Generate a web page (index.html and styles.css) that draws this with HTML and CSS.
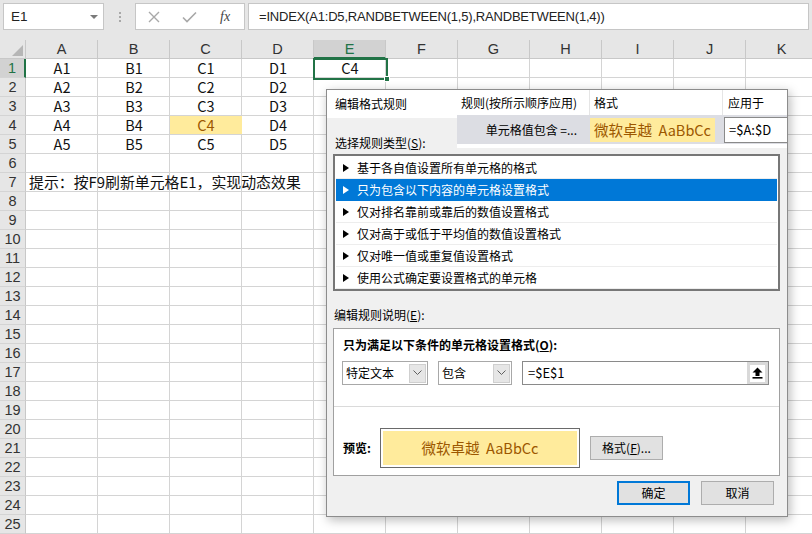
FILE: index.html
```html
<!DOCTYPE html>
<html lang="zh-CN">
<head>
<meta charset="utf-8">
<title>编辑格式规则</title>
<link rel="stylesheet" href="styles.css">
</head>
<body>
<div class="topbar">
  <div class="namebox"><span>E1</span><span class="tri"></span></div>
  <div class="grip"><i></i><i></i><i></i></div>
  <div class="fxbox">
    <svg class="ic-x" width="12" height="12" viewBox="0 0 12 12"><path d="M1 1L11 11M11 1L1 11" stroke="#a8a8a8" stroke-width="1.4" fill="none"/></svg>
    <svg class="ic-ok" width="15" height="12" viewBox="0 0 15 12"><path d="M1 6.5L5 10.5L14 1.5" stroke="#a8a8a8" stroke-width="1.6" fill="none"/></svg>
    <span class="fx">fx</span>
  </div>
  <div class="formula">=INDEX(A1:D5,RANDBETWEEN(1,5),RANDBETWEEN(1,4))</div>
</div>

<div class="sheet">
  <div class="hrow">
    <div class="corner"><span class="ctri"></span></div>
    <div class="ch">A</div><div class="ch">B</div><div class="ch">C</div><div class="ch">D</div>
    <div class="ch sel">E</div><div class="ch">F</div><div class="ch">G</div><div class="ch">H</div>
    <div class="ch">I</div><div class="ch">J</div><div class="ch">K</div>
  </div>
  <div class="row"><div class="rh sel">1</div><div class="cells"><div class="c">A1</div><div class="c">B1</div><div class="c">C1</div><div class="c">D1</div><div class="c active">C4<span class="selbox"><span class="handle"></span></span></div></div></div>
  <div class="row"><div class="rh">2</div><div class="cells"><div class="c">A2</div><div class="c">B2</div><div class="c">C2</div><div class="c">D2</div></div></div>
  <div class="row"><div class="rh">3</div><div class="cells"><div class="c">A3</div><div class="c">B3</div><div class="c">C3</div><div class="c">D3</div></div></div>
  <div class="row"><div class="rh">4</div><div class="cells"><div class="c">A4</div><div class="c">B4</div><div class="c neutral">C4</div><div class="c">D4</div></div></div>
  <div class="row"><div class="rh">5</div><div class="cells"><div class="c">A5</div><div class="c">B5</div><div class="c">C5</div><div class="c">D5</div></div></div>
  <div class="row"><div class="rh">6</div><div class="cells"></div></div>
  <div class="row"><div class="rh">7</div><div class="cells"><div class="hint">提示：按F9刷新单元格E1，实现动态效果</div></div></div>
  <div class="row"><div class="rh">8</div><div class="cells"></div></div>
  <div class="row"><div class="rh">9</div><div class="cells"></div></div>
  <div class="row"><div class="rh">10</div><div class="cells"></div></div>
  <div class="row"><div class="rh">11</div><div class="cells"></div></div>
  <div class="row"><div class="rh">12</div><div class="cells"></div></div>
  <div class="row"><div class="rh">13</div><div class="cells"></div></div>
  <div class="row"><div class="rh">14</div><div class="cells"></div></div>
  <div class="row"><div class="rh">15</div><div class="cells"></div></div>
  <div class="row"><div class="rh">16</div><div class="cells"></div></div>
  <div class="row"><div class="rh">17</div><div class="cells"></div></div>
  <div class="row"><div class="rh">18</div><div class="cells"></div></div>
  <div class="row"><div class="rh">19</div><div class="cells"></div></div>
  <div class="row"><div class="rh">20</div><div class="cells"></div></div>
  <div class="row"><div class="rh">21</div><div class="cells"></div></div>
  <div class="row"><div class="rh">22</div><div class="cells"></div></div>
  <div class="row"><div class="rh">23</div><div class="cells"></div></div>
  <div class="row"><div class="rh">24</div><div class="cells"></div></div>
  <div class="row"><div class="rh">25</div><div class="cells"></div></div>
</div>

<div class="dialog">
  <div class="dtop">
    <div class="dleft">
      <div class="dtitle">编辑格式规则</div>
      <div class="lbl-type">选择规则类型(<u>S</u>):</div>
    </div>
    <div class="mgr">
      <div class="mgr-head"><span class="m1">规则(按所示顺序应用)</span><span class="m2">格式</span><span class="m3">应用于</span></div>
      <div class="mgr-row"><span class="m1 r">单元格值包含 =...</span><span class="m2"><span class="fmt">微软卓越&nbsp; AaBbCc</span></span><span class="m3"><span class="applies">=$A:$D</span></span></div>
      <div class="mgr-gap"></div>
    </div>
  </div>

  <div class="listbox">
    <div class="item"><svg class="arr" width="6" height="8" viewBox="0 0 6 8"><path d="M0 0L6 4L0 8Z"/></svg>基于各自值设置所有单元格的格式</div>
    <div class="item on"><svg class="arr" width="6" height="8" viewBox="0 0 6 8"><path d="M0 0L6 4L0 8Z"/></svg>只为包含以下内容的单元格设置格式</div>
    <div class="item"><svg class="arr" width="6" height="8" viewBox="0 0 6 8"><path d="M0 0L6 4L0 8Z"/></svg>仅对排名靠前或靠后的数值设置格式</div>
    <div class="item"><svg class="arr" width="6" height="8" viewBox="0 0 6 8"><path d="M0 0L6 4L0 8Z"/></svg>仅对高于或低于平均值的数值设置格式</div>
    <div class="item"><svg class="arr" width="6" height="8" viewBox="0 0 6 8"><path d="M0 0L6 4L0 8Z"/></svg>仅对唯一值或重复值设置格式</div>
    <div class="item"><svg class="arr" width="6" height="8" viewBox="0 0 6 8"><path d="M0 0L6 4L0 8Z"/></svg>使用公式确定要设置格式的单元格</div>
  </div>

  <div class="lbl-desc">编辑规则说明(<u>E</u>):</div>
  <div class="descbox">
    <div class="cond">只为满足以下条件的单元格设置格式(<u>O</u>):</div>
    <div class="controls">
      <div class="combo w1"><span>特定文本</span><span class="ddb"><svg width="9" height="6" viewBox="0 0 9 6"><path d="M0.5 0.5L4.5 4.5L8.5 0.5" stroke="#606060" fill="none"/></svg></span></div>
      <div class="combo w2"><span>包含</span><span class="ddb"><svg width="9" height="6" viewBox="0 0 9 6"><path d="M0.5 0.5L4.5 4.5L8.5 0.5" stroke="#606060" fill="none"/></svg></span></div>
      <div class="refedit"><span>=$E$1</span><span class="upbtn"><span class="upin"><svg width="11" height="12" viewBox="0 0 11 12"><path d="M5.5 0.5L10.5 5.5H7.5V9H3.5V5.5H0.5Z" fill="#000"/><rect x="0.5" y="10" width="10" height="1.6" fill="#000"/></svg></span></span></div>
    </div>
    <div class="sep"></div>
    <div class="prevrow">
      <span class="plbl">预览:</span>
      <div class="pbox"><div class="pin">微软卓越&nbsp; AaBbCc</div></div>
      <div class="btn fmtbtn">格式(<u>F</u>)...</div>
    </div>
  </div>
  <div class="btnrow">
    <div class="btn ok">确定</div>
    <div class="btn">取消</div>
  </div>
</div>
</body>
</html>
```

FILE: styles.css
```css
* { box-sizing: border-box; margin: 0; padding: 0; }
html, body { width: 812px; height: 534px; overflow: hidden; }
body {
  position: relative;
  background: #fff;
  color: #000;
  font-family: "Noto Sans CJK SC", "Liberation Sans", sans-serif;
}

/* ---------- formula bar ---------- */
.topbar {
  height: 40px;
  background: #e6e6e6;
  display: flex;
  align-items: flex-start;
  padding: 3px 3px 0 3px;
}
.namebox {
  width: 101px;
  height: 27px;
  background: #fff;
  border: 1px solid #c6c6c6;
  display: flex;
  align-items: center;
  justify-content: space-between;
  padding: 0 5px 0 7px;
  font-family: "Liberation Sans", sans-serif;
  font-size: 13.5px;
  color: #222;
}
.tri {
  width: 0; height: 0;
  border-left: 4px solid transparent;
  border-right: 4px solid transparent;
  border-top: 4px solid #7a7a7a;
}
.grip {
  width: 31px;
  height: 27px;
  display: flex;
  flex-direction: column;
  align-items: center;
  justify-content: center;
  gap: 2px;
}
.grip i { display: block; width: 2px; height: 2px; background: #a8a8a8; }
.fxbox {
  width: 110px;
  height: 27px;
  background: #fff;
  border: 1px solid #c6c6c6;
  display: flex;
  align-items: center;
}
.ic-x { margin-left: 12px; }
.ic-ok { margin-left: 22px; }
.fx {
  margin-left: 23px;
  font-family: "Liberation Serif", serif;
  font-style: italic;
  font-size: 14px;
  color: #444;
}
.formula {
  flex: 1;
  margin-left: 3px;
  height: 27px;
  background: #fff;
  border: 1px solid #c6c6c6;
  padding-left: 10px;
  font-family: "Liberation Sans", sans-serif;
  font-size: 13px;
  letter-spacing: -0.2px;
  line-height: 25px;
  color: #222;
  white-space: nowrap;
}

/* ---------- sheet ---------- */
.sheet { display: flex; flex-direction: column; }
.hrow { display: flex; height: 19px; background: #e6e6e6; }
.corner {
  width: 26px; flex: none;
  border-right: 1px solid #c8c8c8;
  border-bottom: 1px solid #c8c8c8;
  display: flex; align-items: flex-end; justify-content: flex-end;
  padding: 0 2px 2px 0;
}
.ctri {
  width: 0; height: 0;
  border-left: 11px solid transparent;
  border-bottom: 11px solid #b6b6b6;
}
.ch {
  width: 72px; flex: none;
  border-right: 1px solid #c8c8c8;
  border-bottom: 1px solid #c8c8c8;
  text-align: center;
  font-family: "Liberation Sans", sans-serif;
  font-size: 14.5px;
  line-height: 19px;
  color: #333;
}
.ch.sel { background: #d2d2d2; color: #217346; border-bottom: 2px solid #217346; line-height: 18px; }

.row { display: flex; height: 19px; }
.rh {
  width: 26px; flex: none;
  background: #e6e6e6;
  border-right: 1px solid #c8c8c8;
  border-bottom: 1px solid #d4d4d4;
  text-align: center;
  font-family: "Liberation Sans", sans-serif;
  font-size: 14.5px;
  line-height: 18px;
  color: #333;
}
.rh.sel { background: #d2d2d2; color: #217346; border-right: 2px solid #217346; }
.cells {
  flex: 1;
  display: flex;
  border-bottom: 1px solid #d4d4d4;
  background: repeating-linear-gradient(to right, transparent 0 71px, #d4d4d4 71px 72px);
}
.c {
  width: 72px; flex: none;
  text-align: center;
  font-size: 14.5px;
  line-height: 18px;
  color: #111;
}
.c.neutral { background: #ffeb9c; color: #9c5700; }
.c.active { position: relative; }
.selbox {
  position: absolute;
  left: -1px; top: -1px;
  width: 75px; height: 22px;
  border: 2px solid #217346;
}
.handle {
  position: absolute;
  right: -4px; bottom: -4px;
  width: 6px; height: 6px;
  background: #217346;
  border: 1px solid #fff;
}
.hint {
  padding-left: 3px;
  white-space: nowrap;
  font-size: 14.9px;
  line-height: 18px;
  color: #111;
}

/* ---------- dialog ---------- */
.dialog {
  position: absolute;
  left: 326px; top: 89px;
  width: 462px; height: 428px;
  background: #f0f0f0;
  border: 1px solid #8c8c8c;
  box-shadow: 2px 3px 10px rgba(0, 0, 0, 0.28);
  font-size: 12px;
  line-height: 16px;
  color: #000;
  display: flex;
  flex-direction: column;
}
.dtop { display: flex; }
.dleft { width: 130px; flex: none; }
.dtitle {
  height: 28px;
  background: #fff;
  padding-left: 8px;
  line-height: 28px;
}
.lbl-type { margin-top: 17px; padding-left: 8px; }
.mgr { width: 330px; flex: none; }
.mgr-head { height: 25px; background: #fff; display: flex; }
.mgr-head span { line-height: 25px; }
.m1 { width: 133px; flex: none; padding-left: 4px; border-right: 1px solid #e5e5e5; }
.m2 { width: 133px; flex: none; padding-left: 4px; border-right: 1px solid #e5e5e5; }
.m3 { flex: 1; padding-left: 5px; }
.mgr-row { height: 29px; background: #dcdde3; display: flex; align-items: center; }
.mgr-row .m1 { border: none; text-align: right; padding: 0 13px 0 0; }
.mgr-row .m2 { border: none; padding: 0; }
.mgr-row .m3 { padding: 0 0 0 1px; }
.fmt {
  display: block;
  width: 125px; height: 24px;
  background: #ffeb9c;
  color: #9c5700;
  font-size: 14.5px;
  line-height: 24px;
  text-align: center;
  white-space: nowrap;
}
.applies {
  display: block;
  height: 26px;
  background: #fff;
  border: 1px solid #8a8a8a;
  border-right: none;
  padding-left: 4px;
  font-size: 13px;
  line-height: 24px;
}
.mgr-gap { height: 4px; background: #fff; }

.listbox {
  margin: 3px 7px 0 6px;
  height: 137px;
  background: #fff;
  border: 2px solid #777;
  padding: 1px;
}
.item {
  height: 22px;
  display: flex;
  align-items: center;
  padding-left: 7px;
  border-bottom: 1px solid #ededed;
  white-space: nowrap;
}
.item .arr { margin-right: 8px; fill: #000; }
.item.on { background: #0078d7; color: #fff; border-bottom-color: #0078d7; }
.item.on .arr { fill: #fff; }

.lbl-desc { margin: 16px 0 0 7px; }
.descbox {
  margin: 5px 7px 0 6px;
  height: 148px;
  background: #fff;
  border: 1px solid #a0a0a0;
  display: flex;
  flex-direction: column;
}
.cond { margin: 8px 0 0 9px; font-weight: bold; }
.controls { margin: 8px 0 0 8px; display: flex; gap: 10px; height: 24px; }
.combo {
  height: 24px;
  border: 1px solid #a8a8a8;
  background: #fff;
  display: flex;
  align-items: center;
  justify-content: space-between;
  padding: 0 1px 0 3px;
}
.combo.w1 { width: 86px; }
.combo.w2 { width: 74px; }
.ddb {
  width: 17px; height: 19px;
  background: #e6e6e6;
  border: 1px solid #cfcfcf;
  display: flex; align-items: center; justify-content: center;
}
.refedit {
  width: 247px; height: 24px;
  border: 1px solid #8a8a8a;
  background: #fff;
  display: flex;
  align-items: center;
  justify-content: space-between;
  padding-left: 5px;
  font-size: 13px;
}
.upbtn {
  width: 21px; height: 22px;
  background: #d9d9d9;
  display: flex; align-items: center; justify-content: center;
}
.upin {
  width: 15px; height: 17px;
  background: #fff;
  display: flex; align-items: center; justify-content: center;
}
.sep { margin-top: 21px; height: 1px; background: #dadada; }
.prevrow { margin: 21px 0 0 9px; display: flex; align-items: center; }
.plbl { width: 37px; font-weight: bold; }
.pbox {
  width: 200px; height: 40px;
  border: 1px solid #6a6a6a;
  background: #fff;
  padding: 2px;
}
.pin {
  height: 100%;
  background: #ffeb9c;
  color: #9c5700;
  font-size: 14.5px;
  line-height: 34px;
  text-align: center;
  white-space: nowrap;
}
.btn {
  width: 73px; height: 24px;
  background: #e1e1e1;
  border: 1px solid #adadad;
  text-align: center;
  line-height: 22px;
}
.fmtbtn { margin-left: 10px; }
.btnrow {
  margin-top: 5px;
  display: flex;
  justify-content: flex-end;
  gap: 11px;
  padding-right: 13px;
}
.btn.ok { border: 2px solid #0078d7; line-height: 20px; }
```
